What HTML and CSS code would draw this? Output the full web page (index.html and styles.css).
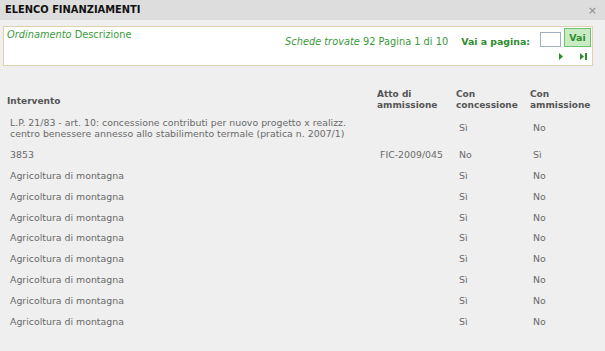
FILE: index.html
```html
<!DOCTYPE html>
<html lang="it">
<head>
<meta charset="utf-8">
<title>Elenco finanziamenti</title>
<link rel="stylesheet" href="styles.css">
</head>
<body>
<div class="dialog">
  <div class="titlebar">
    <span class="title">ELENCO FINANZIAMENTI</span>
    <span class="close">&#215;</span>
  </div>
  <div class="filter">
    <div class="order"><em>Ordinamento</em> Descrizione</div>
    <div class="pager">
      <div class="pager-top">
        <span class="count"><em>Schede trovate</em> 92 Pagina 1 di 10</span>
        <span class="goto">Vai a pagina:</span>
        <input class="page-input" type="text">
        <button class="go">Vai</button>
      </div>
      <div class="nav">
        <svg class="arrow" width="4" height="7" viewBox="0 0 4 7"><path d="M0 0 L4 3.5 L0 7 Z"/></svg>
        <svg class="arrow last" width="7" height="7" viewBox="0 0 7 7"><path d="M0 0 L4 3.5 L0 7 Z"/><rect x="5" y="0" width="2" height="7"/></svg>
      </div>
    </div>
  </div>
  <table class="list">
    <thead>
      <tr>
        <th class="c-int">Intervento</th>
        <th class="c-atto">Atto di<br>ammissione</th>
        <th class="c-conc">Con<br>concessione</th>
        <th class="c-amm">Con<br>ammissione</th>
      </tr>
    </thead>
    <tbody>
      <tr><td>L.P. 21/83 - art. 10: concessione contributi per nuovo progetto x realizz.<br>centro benessere annesso allo stabilimento termale (pratica n. 2007/1)</td><td></td><td>Sì</td><td>No</td></tr>
      <tr><td>3853</td><td>FIC-2009/045</td><td>No</td><td>Sì</td></tr>
      <tr><td>Agricoltura di montagna</td><td></td><td>Sì</td><td>No</td></tr>
      <tr><td>Agricoltura di montagna</td><td></td><td>Sì</td><td>No</td></tr>
      <tr><td>Agricoltura di montagna</td><td></td><td>Sì</td><td>No</td></tr>
      <tr><td>Agricoltura di montagna</td><td></td><td>Sì</td><td>No</td></tr>
      <tr><td>Agricoltura di montagna</td><td></td><td>Sì</td><td>No</td></tr>
      <tr><td>Agricoltura di montagna</td><td></td><td>Sì</td><td>No</td></tr>
      <tr><td>Agricoltura di montagna</td><td></td><td>Sì</td><td>No</td></tr>
      <tr><td>Agricoltura di montagna</td><td></td><td>Sì</td><td>No</td></tr>
    </tbody>
  </table>
</div>
</body>
</html>
```

FILE: styles.css
```css
html, body {
  margin: 0;
  padding: 0;
  background: #efefef;
}

body {
  font-family: "DejaVu Sans", Verdana, sans-serif;
  font-size: 9.4px;
  color: #666;
}

.dialog {
  width: 605px;
  height: 351px;
  background: #efefef;
  overflow: hidden;
}

.titlebar {
  height: 20px;
  background: #dddddd;
  display: flex;
  align-items: center;
  justify-content: space-between;
  padding: 0 8px 0 5px;
}

.title {
  font-weight: bold;
  font-size: 9.9px;
  color: #111;
  margin-top: -1px;
}

.close {
  font-size: 11px;
  color: #8a8a8a;
  margin-top: 1px;
}

.filter {
  margin: 6px 12px 0 3px;
  height: 37px;
  background: #fff;
  border: 1px solid #ddd2ad;
  display: flex;
  justify-content: space-between;
  padding: 1px 1px 0 3px;
  color: #3a9a3a;
  font-size: 9.8px;
}

.order {
  padding-top: 1px;
}

.pager {
  display: flex;
  flex-direction: column;
  align-items: flex-end;
}

.pager-top {
  display: flex;
  align-items: flex-start;
}

.count {
  margin-top: 8px;
}

.goto {
  font-weight: bold;
  font-size: 9.4px;
  color: #2e8b2e;
  margin: 8px 0 0 13px;
}

.page-input {
  width: 19px;
  height: 13px;
  margin: 4px 0 0 10px;
  padding: 0;
  border: 1px solid #9fb0c4;
  background: #fff;
}

.go {
  width: 27px;
  height: 19px;
  margin-left: 3px;
  padding: 0;
  border: 1px solid #6cc46c;
  background: #c9ebc3;
  color: #2e8b2e;
  font-family: "DejaVu Sans", Verdana, sans-serif;
  font-size: 9.4px;
  font-weight: bold;
}

.nav {
  display: flex;
  align-items: center;
  gap: 17px;
  margin: 6px 4px 0 0;
}

.arrow {
  fill: #2e8b2e;
}

.list {
  border-collapse: collapse;
  margin: 20px 0 0 4px;
  width: 598px;
  table-layout: fixed;
}

.list th {
  text-align: left;
  vertical-align: middle;
  font-weight: bold;
  font-size: 9px;
  color: #555;
  line-height: 11px;
  padding: 3px 3px 2px 3px;
}

.list th.c-int {
  padding-top: 6px;
}

.list td {
  line-height: 10.9px;
  padding: 5px 3px 5px 6px;
  vertical-align: middle;
  color: #6a6a6a;
}

.c-int { width: 364px; }
.c-atto { width: 73px; }
.c-conc { width: 68px; }
.c-amm { width: auto; }
```
